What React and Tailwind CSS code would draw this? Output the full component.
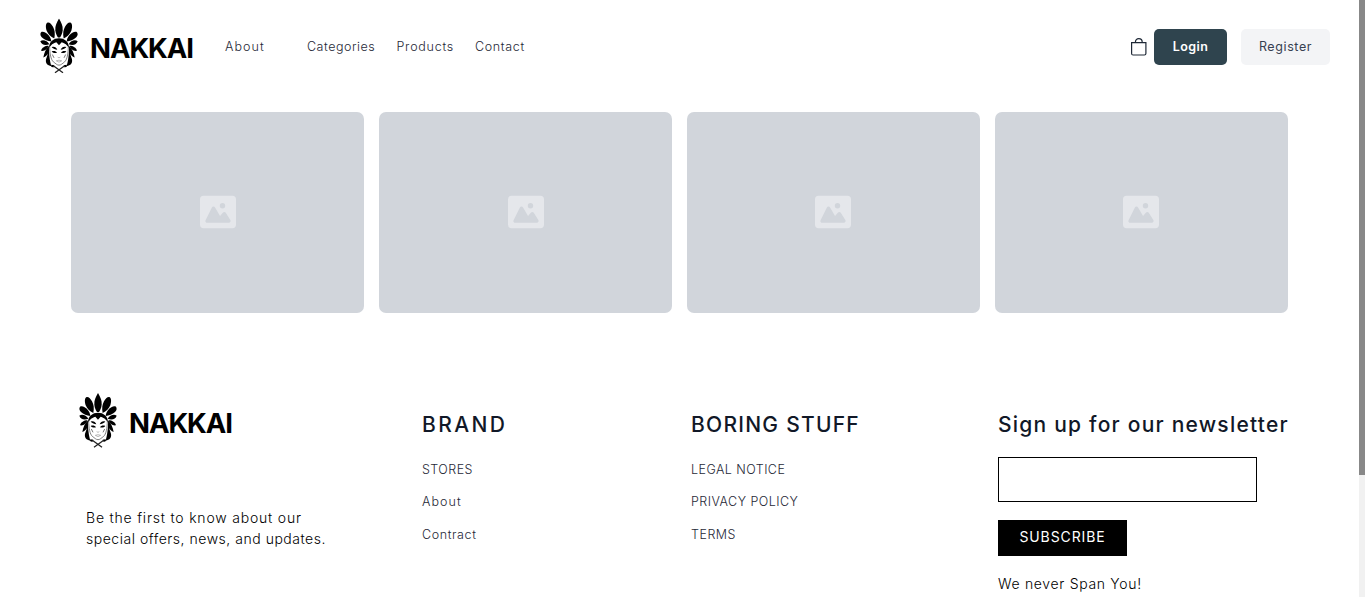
import React from "react";

function Mascot() {
  return (
    <svg className="h-[55px] w-[38px] shrink-0" viewBox="0 0 114 165" fill="#000">
      <path d="M57 0C50 12 45 22 46 35c1 9 4 16 8 22h6c4-6 7-13 8-22 1-13-4-23-11-35Z" />
      <g id="plumes">
        <path d="M23 12c-7 3-6 15-3 25 4 10 12 18 23 23 3-15 1-26-4-35-4-8-10-14-16-13Z" />
        <path d="M5 40c-6 4-4 12 1 17 7 7 18 11 28 12-1-14-15-31-29-29Z" />
        <path d="M1 68c3 10 14 14 27 9-6-10-19-15-27-9Z" />
        <path d="M3 97c2-9 12-15 22-15-2 11-12 17-22 15Z" />
        <path d="M27 82c-9 9-15 22-17 35 7-3 11-7 14-12l-6 17c-2 12 4 18 16 21-4-12-8-38-7-61Z" />
      </g>
      <use href="#plumes" transform="matrix(-1 0 0 1 114 0)" />
      <path d="M27 88c0-19 14-29 30-29s30 10 30 29l-6-7c-4-6-11-8-16-10l-8 9-8-9c-5 2-12 4-16 10Z" />
      <path
        d="M29 84c0 21 4 40 11 46 7 5 11 10 17 10s10-5 17-10c7-6 11-25 11-46"
        fill="none"
        stroke="#444"
        strokeWidth="2"
      />
      <path d="M35 86c7-3 14 0 17 8-6-1-12-3-17-8ZM79 86c-7-3-14 0-17 8 6-1 12-3 17-8ZM35 99c7-3 13-1 16 4-7 2-12 0-16-4ZM79 99c-7-3-13-1-16 4 7 2 12 0 16-4Z" />
      <path d="M37 108l5 10M77 108l-5 10" stroke="#333" strokeWidth="2" />
      <path d="M53 116l4 2 4-2M49 127l8-2 8 2-8 4Z" fill="none" stroke="#777" strokeWidth="1.5" />
      <path d="M34 139l9 1-3 7-7-3ZM80 139l-9 1 3 7 7-3Z" />
      <path d="M40 142l29 21M74 142l-29 21" fill="none" stroke="#222" strokeWidth="4" />
    </svg>
  );
}

function Logo() {
  return (
    <div className="flex h-[55px] items-center">
      <Mascot />
      <span className="ml-[12px] mt-[6px] text-[27.5px] leading-none font-bold tracking-[-1.05px] text-black">
        NAKKAI
      </span>
    </div>
  );
}

function BagIcon() {
  return (
    <svg className="h-[18px] w-4" viewBox="0 0 16 18" fill="none" stroke="#1f2937" strokeWidth="1.2">
      <path d="M.6 4.600h14.300v10.900c0 .9-.6 1.500-1.500 1.500H2.100c-.9 0-1.500-.6-1.500-1.500Z" />
      <path d="M4.400 4.600v-.4c0-2.200 1.300-3.600 3.400-3.600s3.400 1.400 3.400 3.600v.4" />
    </svg>
  );
}

function PlaceholderCard() {
  return (
    <div className="flex h-[201px] items-center justify-center rounded-[7px] bg-[#d1d5db] pb-[2px]">
      <svg className="h-9 w-9" viewBox="0 0 20 18" fill="#e5e7eb">
        <path d="M18 0H2a2 2 0 0 0-2 2v14a2 2 0 0 0 2 2h16a2 2 0 0 0 2-2V2a2 2 0 0 0-2-2Zm-5.500 4a1.500 1.500 0 1 1 0 3 1.500 1.500 0 0 1 0-3Zm4.376 10.481A1 1 0 0 1 16 15H4a1 1 0 0 1-.895-1.447l3.500-7A1 1 0 0 1 7.468 6a.965.965 0 0 1 .9.500l2.775 4.757 1.546-1.887a1 1 0 0 1 1.618.1l2.541 4a1 1 0 0 1 .028 1.011Z" />
      </svg>
    </div>
  );
}

const link = "text-[12.5px] leading-[18px] font-light whitespace-nowrap text-[#1f2937]";
const heading = "text-[21px] leading-7 font-medium whitespace-nowrap text-[#111827]";

export default function App() {
  return (
    <div className="flex h-[597px] w-[1365px] overflow-hidden bg-white font-['Inter',sans-serif]">
      <div className="w-[1359px] shrink-0">
        <header className="flex h-[94px] items-center pr-[29px] pl-10">
          <div className="w-[185px] -translate-y-[1.5px]">
            <Logo />
          </div>
          <nav className="flex flex-1 items-center">
            <a className={`${link} w-[82px] tracking-[1.05px]`}>About</a>
            <a className={`${link} w-[89.500px] tracking-[0.52px]`}>Categories</a>
            <a className={`${link} w-[78.500px] tracking-[0.75px]`}>Products</a>
            <a className={`${link} tracking-[0.65px]`}>Contact</a>
          </nav>
          <BagIcon />
          <button className="ml-[7px] h-9 w-[73px] rounded-[5px] bg-[#2f444e] text-[12.5px] font-semibold tracking-[0.4px] text-white">
            Login
          </button>
          <button className="ml-[14px] h-9 w-[89px] rounded-[5px] bg-[#f3f4f6] text-[12.5px] font-normal tracking-[0.6px] text-[#374151]">
            Register
          </button>
        </header>

        <main className="mt-[18px] ml-[71px] grid w-[1217px] grid-cols-4 gap-[14.4px]">
          <PlaceholderCard />
          <PlaceholderCard />
          <PlaceholderCard />
          <PlaceholderCard />
        </main>

        <footer className="mt-20 flex pl-[79px]">
          <section className="w-[343px]">
            <Logo />
            <p className="mt-[59px] ml-[7px] text-[14px] leading-[21px] font-light whitespace-nowrap text-black">
              <span className="block tracking-[0.8px]">Be the first to know about our</span>
              <span className="block tracking-[0.52px]">special offers, news, and updates.</span>
            </p>
          </section>
          <section className="w-[269px] pt-[18px]">
            <h2 className={`${heading} tracking-[2.4px]`}>BRAND</h2>
            <ul className="mt-[22px] flex flex-col gap-[14.4px]">
              <li className={`${link} tracking-[0.45px]`}>STORES</li>
              <li className={`${link} tracking-[1.05px]`}>About</li>
              <li className={`${link} tracking-[0.6px]`}>Contract</li>
            </ul>
          </section>
          <section className="w-[307px] pt-[18px]">
            <h2 className={`${heading} tracking-[1.25px]`}>BORING STUFF</h2>
            <ul className="mt-[22px] flex flex-col gap-[14.4px]">
              <li className={`${link} tracking-[0.46px]`}>LEGAL NOTICE</li>
              <li className={`${link} tracking-[0.48px]`}>PRIVACY POLICY</li>
              <li className={`${link} tracking-[0.5px]`}>TERMS</li>
            </ul>
          </section>
          <section className="flex flex-col items-start pt-[18px]">
            <h2 className={`${heading} tracking-[1.22px]`}>Sign up for our newsletter</h2>
            <input className="mt-[18px] h-[45px] w-[259px] border border-black bg-white px-3" />
            <button className="mt-[18px] h-9 w-[129px] bg-black pb-[3px] text-[14px] font-normal tracking-[0.9px] text-white">
              SUBSCRIBE
            </button>
            <p className="mt-[17px] text-[14px] leading-[21px] font-light tracking-[0.68px] whitespace-nowrap text-black">
              We never Span You!
            </p>
          </section>
        </footer>
      </div>
      <div className="h-full w-[6px] shrink-0 bg-[#f1f1f1]">
        <div className="h-[475px] bg-[#888888]" />
      </div>
    </div>
  );
}
